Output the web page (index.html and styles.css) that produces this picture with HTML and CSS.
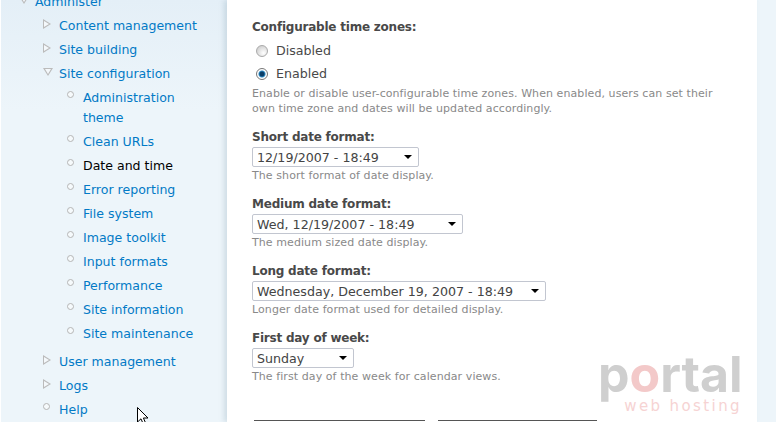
FILE: index.html
```html
<!DOCTYPE html>
<html lang="en">
<head>
  <meta charset="UTF-8">
  <meta name="viewport" content="width=device-width, initial-scale=1.0">
  <title>Date and time</title>
  <link rel="stylesheet" href="styles.css">
</head>
<body>
  <div class="page">
    <div class="sidebar">
      <ul class="menu">
        <li class="open"><a href="#">Administer</a>
          <ul class="menu">
            <li class="closed"><a href="#">Content management</a></li>
            <li class="closed"><a href="#">Site building</a></li>
            <li class="open"><a href="#">Site configuration</a>
              <ul class="menu">
                <li class="leaf"><a href="#">Administration theme</a></li>
                <li class="leaf"><a href="#">Clean URLs</a></li>
                <li class="leaf"><a href="#" class="active">Date and time</a></li>
                <li class="leaf"><a href="#">Error reporting</a></li>
                <li class="leaf"><a href="#">File system</a></li>
                <li class="leaf"><a href="#">Image toolkit</a></li>
                <li class="leaf"><a href="#">Input formats</a></li>
                <li class="leaf"><a href="#">Performance</a></li>
                <li class="leaf"><a href="#">Site information</a></li>
                <li class="leaf"><a href="#">Site maintenance</a></li>
              </ul>
            </li>
            <li class="closed"><a href="#">User management</a></li>
            <li class="closed"><a href="#">Logs</a></li>
            <li class="leaf"><a href="#">Help</a></li>
          </ul>
        </li>
      </ul>
    </div>

    <div class="content">
      <div class="item first">
        <div class="label">Configurable time zones:</div>
        <div class="radio"><span class="dot"></span>Disabled</div>
        <div class="radio"><span class="dot on"></span>Enabled</div>
        <div class="desc">Enable or disable user-configurable time zones. When enabled, users can set their own time zone and dates will be updated accordingly.</div>
      </div>
      <div class="item">
        <div class="label">Short date format:</div>
        <div class="select short"><span>12/19/2007 - 18:49</span><i class="arrow"></i></div>
        <div class="desc">The short format of date display.</div>
      </div>
      <div class="item">
        <div class="label">Medium date format:</div>
        <div class="select medium"><span>Wed, 12/19/2007 - 18:49</span><i class="arrow"></i></div>
        <div class="desc">The medium sized date display.</div>
      </div>
      <div class="item">
        <div class="label">Long date format:</div>
        <div class="select long"><span>Wednesday, December 19, 2007 - 18:49</span><i class="arrow"></i></div>
        <div class="desc">Longer date format used for detailed display.</div>
      </div>
      <div class="item">
        <div class="label">First day of week:</div>
        <div class="select week"><span>Sunday</span><i class="arrow"></i></div>
        <div class="desc">The first day of the week for calendar views.</div>
      </div>
      <div class="buttons">
        <div class="button save"></div>
        <div class="button reset"></div>
      </div>
    </div>
  </div>

  <div class="logo">
    <div class="logo-main">p<span>o</span>rtal</div>
    <div class="logo-sub">web hosting</div>
  </div>

  <svg class="cursor" width="14" height="20" viewBox="0 0 14 20">
    <path d="M1.5 1.5 V16 L5 12.8 L7.4 18.4 L9.8 17.4 L7.4 12 H12 Z" fill="#fff" stroke="#000" stroke-width="1"/>
  </svg>
</body>
</html>
```

FILE: styles.css
```css
html, body {
  height: 100%;
  margin: 0;
  overflow: hidden;
}
body {
  font-family: "DejaVu Sans", Verdana, sans-serif;
  font-size: 12.65px;
  color: #494949;
  background: #edf5fa;
  border-left: 1px solid #fff;
  box-sizing: border-box;
}
.page {
  display: flex;
  height: 422px;
  overflow: hidden;
}

/* Left navigation */
.sidebar {
  width: 226px;
  flex: none;
  box-sizing: border-box;
  padding-right: 20px;
  overflow: hidden;
  font-size: 12.55px;
  background: linear-gradient(#e4eff7, #edf5fa 110px);
}
.menu {
  list-style: none;
  margin: 0;
  padding: 0 0 0 24px;
  line-height: 20px;
}
.sidebar > .menu {
  margin-top: -10px;
  padding-left: 34px;
}
.menu li {
  position: relative;
  padding: 2px 0;
}
.menu .menu {
  margin-top: 2px;
}
.menu .menu .menu {
  margin-bottom: 2px;
}
.menu a {
  color: #027ac6;
  text-decoration: none;
  display: block;
}
.menu a.active {
  color: #000;
}

/* Hollow markers: an outer grey shape with a lighter one on top */
.menu li::before,
.menu li::after {
  content: "";
  position: absolute;
  box-sizing: border-box;
}
.leaf::before {
  left: -16px;
  top: 5px;
  width: 7px;
  height: 7px;
  border: 1px solid #b5b5b5;
  border-radius: 50%;
  background: #f6fafc;
}
.closed::before {
  left: -16px;
  top: 5px;
  border-left: 8px solid #bbb;
  border-top: 5px solid transparent;
  border-bottom: 5px solid transparent;
}
.closed::after {
  left: -15px;
  top: 7px;
  border-left: 5px solid #f4f8fb;
  border-top: 3px solid transparent;
  border-bottom: 3px solid transparent;
}
.open::before {
  left: -16px;
  top: 6px;
  border-top: 8px solid #bbb;
  border-left: 5px solid transparent;
  border-right: 5px solid transparent;
}
.open::after {
  left: -14px;
  top: 7px;
  border-top: 5px solid #f4f8fb;
  border-left: 3px solid transparent;
  border-right: 3px solid transparent;
}

/* Main panel */
.content {
  width: 530px;
  flex: none;
  box-sizing: border-box;
  padding: 0 25px;
  background: #fff;
  box-shadow: -3px 0 5px rgba(120, 150, 170, .25);
}
.item {
  padding-top: 12px;
}
.item.first {
  padding-top: 18px;
}
.label {
  font-size: 12px;
  font-weight: bold;
  letter-spacing: -.22px;
  line-height: 18px;
}
.radio {
  display: flex;
  align-items: center;
  height: 23px;
  padding-left: 4px;
}
.label + .radio {
  margin-top: 3px;
}
.dot {
  width: 12px;
  height: 12px;
  margin-right: 8px;
  border-radius: 50%;
  box-sizing: border-box;
  border: 1px solid #aaa;
  background: radial-gradient(circle at 65% 70%, #fff, #c4c4c4);
}
.dot.on {
  background: radial-gradient(circle, #0a3d66 0 2px, #2d8ac4 3px, #fff 4px);
  border-color: #777;
}
.desc {
  margin-top: 1px;
  font-size: 11px;
  line-height: 15px;
  color: #898989;
  letter-spacing: .08px;
}
.select {
  display: flex;
  align-items: center;
  justify-content: space-between;
  height: 20px;
  box-sizing: border-box;
  border: 1px solid #c2c6d0;
  border-radius: 2px;
  padding: 0 5px 0 4px;
  margin-top: 1px;
  color: #444;
  white-space: nowrap;
}
.select.short { width: 167px; }
.select.medium { width: 211px; }
.select.long { width: 294px; }
.select.week { width: 102px; }
.arrow {
  flex: none;
  width: 0;
  height: 0;
  margin-right: 1px;
  border-top: 4px solid #000;
  border-left: 4px solid transparent;
  border-right: 4px solid transparent;
}
.buttons {
  display: flex;
  gap: 13px;
  margin-top: 36px;
  padding-left: 2px;
}
.button {
  height: 1px;
  border-top: 1px solid #555;
}
.button.save { width: 171px; }
.button.reset { width: 159px; }

/* Watermark and pointer */
.logo {
  position: absolute;
  left: 598px;
  top: 354px;
  width: 144px;
  text-align: right;
}
.logo-main {
  font: bold 50px/40px Inter, sans-serif;
  color: #cfcfcf;
}
.logo-main span {
  color: #f3c9c9;
}
.logo-sub {
  margin-top: 3px;
  font: 15px/18px "DejaVu Sans", sans-serif;
  color: #f6d3d3;
  letter-spacing: 2.4px;
}
.cursor {
  position: absolute;
  left: 136px;
  top: 406px;
}
```
